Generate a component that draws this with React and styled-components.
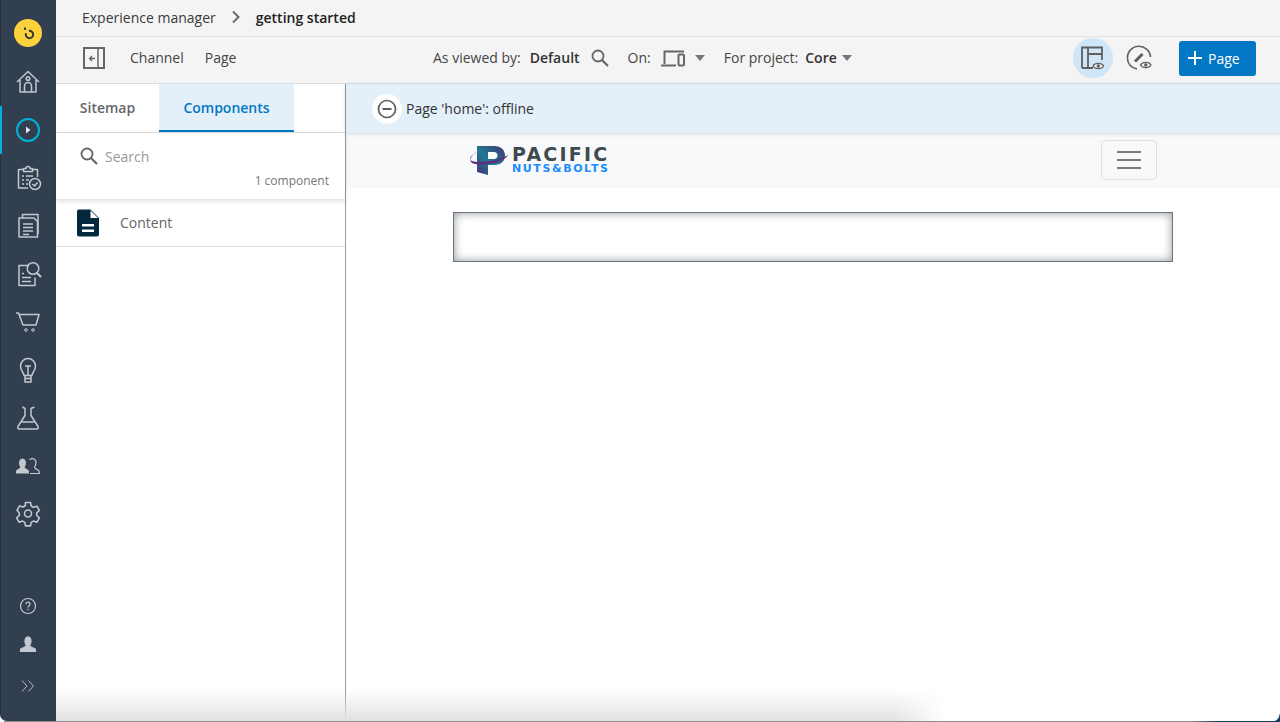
import React from 'react';
import styled, { createGlobalStyle } from 'styled-components';

const GlobalStyle = createGlobalStyle`
  html, body {
    margin: 0;
    padding: 0;
    background: #fff;
    font-family: "Open Sans", "Liberation Sans", sans-serif;
    font-size: 14px;
    color: #333;
  }
  * { box-sizing: border-box; }
`;

const Line = ({ children, size = 28, vb = 28, sw = 1.5, color = '#c3c8cf' }) => (
  <svg width={size} height={size} viewBox={`0 0 ${vb} ${vb}`} fill="none" stroke={color} strokeWidth={sw} strokeLinejoin="round">
    {children}
  </svg>
);

const Eye = ({ x, y }) => (
  <g transform={`translate(${x} ${y})`}>
    <path d="M0 4c2-3.400 8.600-3.400 10.600 0c-2 3.400-8.600 3.400-10.600 0z" fill="#f4f4f4" stroke="#5f5f5f" strokeWidth="1.200" />
    <circle cx="5.300" cy="4" r="1.700" fill="#5f5f5f" stroke="none" />
  </g>
);

const App = () => (
  <Page>
    <GlobalStyle />
    <Sidebar>
      <LogoSlot>
        <Badge>
          <svg width="16" height="16" viewBox="0 0 16 16" fill="none" stroke="#26343c" strokeWidth="1.900">
            <path d="M8.860 5.860A3.700 3.700 0 1 1 6 8.200" />
            <path d="M5 2.500V5" />
          </svg>
        </Badge>
      </LogoSlot>
      <NavItem>
        <Line>
          <path d="M3 14 14 3.500 25 14M6 12V24H22V12" />
          <path d="M10.500 24v-6a3.500 3.500 0 0 1 7 0v6" />
          <circle cx="14" cy="10.500" r="1.800" />
        </Line>
      </NavItem>
      <NavItem $active>
        <svg width="24" height="24" viewBox="0 0 24 24" fill="none">
          <circle cx="12" cy="12" r="11" stroke="#00b3dc" strokeWidth="2" />
          <path d="M10 8.500l4.500 3.500-4.500 3.500z" fill="#e6e8eb" />
        </svg>
      </NavItem>
      <NavItem>
        <Line>
          <path d="M14 24H4.500V5.500H9M19 5.500h4.500V13" />
          <path d="M9.500 7.500v-3H12a2 2 0 0 1 4 0h2.500v3z" />
          <path d="M8 12h2M12 12h7M8 16h2M12 16h3M8 20h2M12 20h2" />
          <circle cx="21" cy="20" r="5.500" />
          <path d="M18.500 20l2 2 3-3.500" />
        </Line>
      </NavItem>
      <NavItem>
        <Line>
          <path d="M5 6h15l3.500 3.500V25H5z" />
          <path d="M8.500 6V2.500H24v19h-.5" />
          <path d="M9 12h10M9 15.500h10M9 19h10M9 22.500h6" />
        </Line>
      </NavItem>
      <NavItem>
        <Line>
          <path d="M15 5.500H5v20h16v-8" />
          <path d="M8 13.500h2M8 17.500h9M8 21.500h9" />
          <circle cx="19" cy="8.500" r="5.800" />
          <path d="M23 13l4 4" strokeWidth="2" />
        </Line>
      </NavItem>
      <NavItem>
        <Line>
          <path d="M2 5h2.500l4.500 12h13l3-10.500H4.700" />
          <circle cx="12" cy="22" r="1.300" strokeWidth="1" />
          <circle cx="19" cy="22" r="1.300" strokeWidth="1" />
        </Line>
      </NavItem>
      <NavItem>
        <Line>
          <path d="M10 19.500c0-3-3.500-4.500-3.500-9.500a7.500 7.500 0 0 1 15 0c0 5-3.500 6.500-3.500 9.500z" />
          <path d="M11 10h6M14 10v9.500M10.500 22.500h7M11 19.500v6.500h6v-6.500" />
        </Line>
      </NavItem>
      <NavItem>
        <Line>
          <path d="M8.500 3l2.500 1.500v7L4 22.500c-.8 1.500 0 2.500 1.500 2.500h17c1.500 0 2.300-1 1.500-2.500l-7-11v-7L20.500 3" />
          <path d="M7.500 18h13" />
        </Line>
      </NavItem>
      <NavItem>
        <svg width="28" height="28" viewBox="0 0 28 28" fill="none">
          <path d="M2 21.500v-2c0-2 3.500-2.500 4.500-4.200-2-2-2.500-8.300 2-8.800 4.500.5 4 6.800 2 8.800 1 1.700 4.500 2.200 4.500 4.200v2z" fill="#c3c8cf" />
          <path d="M15.500 7.500c3.500-2 6.800-.5 6.500 3.500-.2 2-1 3.300-1.500 4.200.5 2 2 1.800 3.800 3 1.200.9 1 1.800 1 3.300H16" stroke="#c3c8cf" strokeWidth="1.200" />
        </svg>
      </NavItem>
      <NavItem>
        <Line sw={1.6}>
          <path d="M11.500 2.500h5l.7 3.500 2.300 1.300 3.400-1.100 2.500 4.300-2.700 2.400v2.600l2.700 2.400-2.500 4.300-3.400-1.100-2.300 1.300-.7 3.500h-5l-.7-3.500-2.300-1.300-3.400 1.100-2.500-4.300 2.700-2.400v-2.600L3.100 10.200l2.500-4.300 3.400 1.100 2.300-1.300z" />
          <circle cx="14" cy="13.500" r="3.500" />
        </Line>
      </NavItem>
      <SidebarFoot>
        <FootItem $h={38}>
          <svg width="18" height="18" viewBox="0 0 18 18" fill="none" stroke="#c3c8cf" strokeWidth="1.200">
            <circle cx="9" cy="9" r="7.500" />
            <path d="M7 7.200c0-2.700 4-2.700 4 0 0 1.600-2 1.500-2 3.200M9 11.800v1.400" />
          </svg>
        </FootItem>
        <FootItem $h={38}>
          <svg width="18" height="18" viewBox="0 0 18 18" fill="#c3c8cf">
            <path d="M1 17v-2.500c0-1.800 4.800-2.500 5.800-4C4.800 8.500 4.500 1.500 9 1.200c4.500.3 4.200 7.300 2.200 9.300 1 1.500 5.800 2.200 5.800 4V17z" />
          </svg>
        </FootItem>
        <FootItem $h={46}>
          <svg width="14" height="12" viewBox="0 0 14 12" fill="none" stroke="#c3c8cf" strokeWidth="0.900">
            <path d="M1 .5 6 6l-5 5.500M7.500.5 12.500 6l-5 5.500" />
          </svg>
        </FootItem>
      </SidebarFoot>
    </Sidebar>

    <Main>
      <Breadcrumb>
        <span>Experience manager</span>
        <Chevron width="10" height="14" viewBox="0 0 10 14" fill="none" stroke="#6b6b6b" strokeWidth="2">
          <path d="M2 1.500 7.500 7 2 12.500" />
        </Chevron>
        <strong>getting started</strong>
      </Breadcrumb>

      <Toolbar>
        <LeftTools>
          <svg width="23" height="23" viewBox="0 0 23 23" fill="none" stroke="#666" strokeWidth="2">
            <rect x="1" y="1" width="20" height="20" />
            <path d="M15 1v20" strokeWidth="1.500" />
            <path d="M12 11.500H6.500M9 9l-2.500 2.500L9 14" strokeWidth="1.300" />
          </svg>
          <ToolLink>Channel</ToolLink>
          <ToolLink>Page</ToolLink>
        </LeftTools>
        <CenterTools>
          <Label>As viewed by:</Label>
          <Value $left={9}>Default</Value>
          <SearchIcon />
          <Label $left={19}>On:</Label>
          <DeviceIcon width="24" height="17" viewBox="0 0 24 17" fill="none" stroke="#666" strokeWidth="2">
            <path d="M3.500 14V1.500H23" />
            <path d="M0 15.500h15" />
            <rect x="17.500" y="4.500" width="5.500" height="11" rx="1" />
          </DeviceIcon>
          <Caret $left={10} />
          <Label $left={19}>For project:</Label>
          <Value $left={7}>Core</Value>
          <Caret $left={5} />
        </CenterTools>
        <RightTools>
          <RoundTool $on>
            <svg width="26" height="26" viewBox="0 0 26 26" fill="none" stroke="#5f5f5f" strokeWidth="1.800">
              <path d="M2 23V2.500h20V15M2 23h11" />
              <path d="M8 2.500V23M8 9h14" />
              <Eye x={13} y={17} />
            </svg>
          </RoundTool>
          <RoundTool>
            <svg width="26" height="26" viewBox="0 0 26 26" fill="none" stroke="#5f5f5f" strokeWidth="1.600">
              <path d="M11 24C5 23 1.500 18.500 1.500 13.500A11.500 11.500 0 0 1 24.500 12" />
              <path d="M9 16.500l7.500-7.500" strokeWidth="3" />
              <Eye x={14.500} y={16} />
            </svg>
          </RoundTool>
          <AddButton>
            <svg width="14" height="14" viewBox="0 0 14 14" stroke="#fff" strokeWidth="2">
              <path d="M7 0v14M0 7h14" />
            </svg>
            Page
          </AddButton>
        </RightTools>
      </Toolbar>

      <Body>
        <Panel>
          <Tabs>
            <Tab $w={103}>Sitemap</Tab>
            <Tab $w={135} $active>Components</Tab>
          </Tabs>
          <SearchBlock>
            <SearchRow>
              <SearchIcon />
              <Placeholder>Search</Placeholder>
            </SearchRow>
            <Count>1 component</Count>
          </SearchBlock>
          <ComponentRow>
            <svg width="24" height="28" viewBox="0 0 24 28">
              <path d="M3 .5h11.500L23 9v16.500a2 2 0 0 1-2 2H3a2 2 0 0 1-2-2v-23a2 2 0 0 1 2-2z" fill="#04293f" />
              <path d="M14.500 1.500 22 9h-7.500z" fill="#fff" />
              <path d="M6 15h12v2.500H6zM6 20.500h12V23H6z" fill="#fff" />
            </svg>
            <span>Content</span>
          </ComponentRow>
        </Panel>

        <Preview>
          <Banner>
            <StatusDot>
              <svg width="20" height="20" viewBox="0 0 20 20" fill="none" stroke="#5c5c5c" strokeWidth="1.700">
                <circle cx="10" cy="10" r="8.500" />
                <path d="M5.500 10h9" strokeWidth="2" />
              </svg>
            </StatusDot>
            <span>Page 'home': offline</span>
          </Banner>
          <SiteNav>
            <Container $nav>
              <Brand>
                <svg width="40" height="32" viewBox="0 0 40 32" fill="none">
                  <defs>
                    <linearGradient id="brandFill" x1="0" y1="1" x2="1" y2="0">
                      <stop offset="0" stopColor="#4b2c77" />
                      <stop offset="0.450" stopColor="#1f7a93" />
                      <stop offset="0.800" stopColor="#34507f" />
                      <stop offset="1" stopColor="#5a2f80" />
                    </linearGradient>
                  </defs>
                  <path d="M8 2h17c7 0 11 4 11 9.500S32 21 25 21h-6v10l-11-3z" fill="url(#brandFill)" />
                  <path d="M19 8h6c2 0 3.500 1.400 3.500 3.500S27 15 25 15h-6z" fill="#fff" />
                  <path d="M7 9C2 11.500.3 14 1.500 16c3 3 17 2.500 27-.5 6-2 10-3.500 11-5.500-1 3.500-6 6.500-13 8.500-9 2.500-20 3-24 0-3-2.500 0-7 4.500-10z" fill="#5a2f80" />
                </svg>
                <BrandText>
                  <BrandName>PACIFIC</BrandName>
                  <BrandSub>NUTS&amp;BOLTS</BrandSub>
                </BrandText>
              </Brand>
              <Burger>
                <span />
                <span />
                <span />
              </Burger>
            </Container>
          </SiteNav>
          <Container>
            <DropZone />
          </Container>
        </Preview>
      </Body>
    </Main>
    <BottomShade />
    <BottomEdge />
    <WindowCorner />
  </Page>
);

const SearchIcon = () => (
  <IconBox>
    <svg width="18" height="18" viewBox="0 0 18 18" fill="none" stroke="#666" strokeWidth="1.800">
      <circle cx="7" cy="7" r="5.500" />
      <path d="M11 11l6 6" strokeWidth="2.200" />
    </svg>
  </IconBox>
);

export default App;

const Page = styled.div`
  position: relative;
  display: flex;
  width: 1280px;
  height: 722px;
  overflow: hidden;
  background: #fff;
`;

const Sidebar = styled.nav`
  display: flex;
  flex-direction: column;
  flex: 0 0 56px;
  height: 721px;
  padding-top: 9px;
  background: #323f50;
  border-left: 1px solid #27313e;
  border-bottom-left-radius: 7px;
`;

const LogoSlot = styled.div`
  display: flex;
  justify-content: center;
  height: 49px;
  margin-left: -1px;
`;

const Badge = styled.div`
  display: flex;
  align-items: center;
  justify-content: center;
  width: 28px;
  height: 28px;
  margin-top: 10px;
  border-radius: 50%;
  background: #fdd13c;
`;

const NavItem = styled.div`
  display: flex;
  align-items: center;
  justify-content: center;
  height: 48px;
  margin-left: -1px;
  border-left: 2px solid ${({ $active }) => ($active ? '#00b3dc' : 'transparent')};
  padding-right: 2px;
`;

const SidebarFoot = styled.div`
  display: flex;
  flex-direction: column;
  margin-top: auto;
  margin-left: -1px;
  padding-bottom: 12px;
`;

const FootItem = styled.div`
  display: flex;
  align-items: center;
  justify-content: center;
  height: ${({ $h }) => $h}px;
`;

const Main = styled.div`
  display: flex;
  flex-direction: column;
  flex: 1;
  min-width: 0;
`;

const Breadcrumb = styled.div`
  display: flex;
  align-items: center;
  height: 37px;
  padding: 0 0 2px 26px;
  background: #f4f4f4;
  border-bottom: 1px solid #e2e2e2;
  color: #3a3a3a;

  strong {
    font-weight: 600;
    color: #222;
  }
`;

const Chevron = styled.svg`
  margin: 0 15px 0 15px;
`;

const Toolbar = styled.div`
  display: flex;
  align-items: center;
  height: 47px;
  padding-bottom: 4px;
  background: #f4f4f4;
  border-bottom: 1px solid #dcdcdc;
`;

const LeftTools = styled.div`
  display: flex;
  align-items: center;
  flex: 0 0 377px;
  padding-left: 27px;
`;

const ToolLink = styled.span`
  margin: 0 0 2px 21px;
  color: #444;

  svg + & {
    margin-left: 24px;
  }
`;

const CenterTools = styled.div`
  display: flex;
  align-items: center;
  flex: 1;
`;

const Label = styled.span`
  margin: 0 0 2px ${({ $left }) => $left || 0}px;
  color: #444;
`;

const Value = styled.span`
  margin: 0 0 2px ${({ $left }) => $left}px;
  font-weight: 600;
  color: #333;
`;

const IconBox = styled.span`
  display: inline-flex;
  margin-left: 11px;
`;

const DeviceIcon = styled.svg`
  margin-left: 10px;
`;

const Caret = styled.span`
  width: 0;
  height: 0;
  margin-left: ${({ $left }) => $left}px;
  border-left: 5.500px solid transparent;
  border-right: 5.500px solid transparent;
  border-top: 6px solid #777;
`;

const RightTools = styled.div`
  display: flex;
  align-items: center;
  padding-right: 24px;
`;

const RoundTool = styled.div`
  display: flex;
  align-items: center;
  justify-content: center;
  width: 40px;
  height: 40px;
  margin-left: 6px;
  border-radius: 50%;
  background: ${({ $on }) => ($on ? '#cfe6f9' : 'transparent')};
`;

const AddButton = styled.button`
  display: flex;
  align-items: center;
  gap: 6px;
  width: 77px;
  height: 35px;
  margin-left: 20px;
  padding: 0 0 0 9px;
  border: 0;
  border-radius: 3px;
  background: #0277c3;
  color: #fff;
  font: 400 14px "Open Sans", sans-serif;
`;

const Body = styled.div`
  display: flex;
  flex: 1;
  min-height: 0;
`;

const Panel = styled.aside`
  flex: 0 0 290px;
  height: 633px;
  border-right: 1px solid #9a9a9a;
`;

const Tabs = styled.div`
  display: flex;
  height: 49px;
  border-bottom: 1px solid #e0e0e0;
`;

const Tab = styled.div`
  display: flex;
  align-items: center;
  justify-content: center;
  width: ${({ $w }) => $w}px;
  height: 48px;
  font-weight: 600;
  color: ${({ $active }) => ($active ? '#0277c3' : '#666')};
  background: ${({ $active }) => ($active ? '#e3f0f9' : 'transparent')};
  border-bottom: 2px solid ${({ $active }) => ($active ? '#0277c3' : 'transparent')};
`;

const SearchBlock = styled.div`
  position: relative;
  height: 66px;
  padding: 13px 16px 0 24px;
  box-shadow: 0 2px 5px rgba(0, 0, 0, 0.14);
`;

const SearchRow = styled.div`
  display: flex;
  align-items: center;
  height: 20px;

  ${IconBox} {
    margin-left: 0;
  }
`;

const Placeholder = styled.span`
  margin-left: 7px;
  color: #999;
`;

const Count = styled.div`
  margin-top: 7px;
  text-align: right;
  font-size: 12px;
  line-height: 16px;
  color: #777;
`;

const ComponentRow = styled.div`
  display: flex;
  align-items: center;
  height: 48px;
  padding-left: 20px;
  border-bottom: 1px solid #dcdcdc;
  color: #666;

  span {
    margin-left: 20px;
  }
`;

const Preview = styled.section`
  flex: 1;
  min-width: 0;
`;

const Banner = styled.div`
  position: relative;
  display: flex;
  align-items: center;
  height: 49px;
  padding-left: 26px;
  background: #e3f0f9;
  box-shadow: 0 1px 4px rgba(0, 0, 0, 0.14);
  color: #333;
`;

const StatusDot = styled.div`
  display: flex;
  align-items: center;
  justify-content: center;
  width: 30px;
  height: 30px;
  margin-right: 4px;
  border-radius: 50%;
  background: #fff;
`;

const SiteNav = styled.div`
  height: 55px;
  background: #f8f9fa;
`;

const Container = styled.div`
  display: ${({ $nav }) => ($nav ? 'flex' : 'block')};
  align-items: center;
  justify-content: space-between;
  width: 720px;
  height: ${({ $nav }) => ($nav ? '55px' : 'auto')};
  margin: 0 auto;
  padding: ${({ $nav }) => ($nav ? '0 16px 2px' : '0')};
`;

const Brand = styled.div`
  display: flex;
  align-items: center;
  gap: 3px;
`;

const BrandText = styled.div`
  display: flex;
  flex-direction: column;
  margin-top: -1px;
`;

const BrandName = styled.span`
  font-family: "DejaVu Sans", sans-serif;
  font-size: 19px;
  line-height: 18px;
  font-weight: 700;
  letter-spacing: 2.200px;
  color: #3d4b4f;
`;

const BrandSub = styled.span`
  margin-top: 1px;
  font-family: "DejaVu Sans", sans-serif;
  font-size: 11px;
  line-height: 10px;
  font-weight: 700;
  letter-spacing: 1.600px;
  color: #1a8cff;
`;

const Burger = styled.div`
  display: flex;
  flex-direction: column;
  align-items: center;
  justify-content: center;
  gap: 6px;
  width: 56px;
  height: 40px;
  border: 1px solid #dedfe1;
  border-radius: 4px;

  span {
    width: 24px;
    height: 2px;
    background: #7c7c7c;
  }
`;

const DropZone = styled.div`
  height: 50px;
  margin-top: 24px;
  border: 1px solid #6c757d;
  box-shadow: inset 0 0 10px rgba(108, 117, 125, 0.75);
`;

const BottomShade = styled.div`
  position: absolute;
  left: 56px;
  bottom: 1px;
  width: 890px;
  height: 32px;
  background: linear-gradient(to bottom, rgba(225, 225, 225, 0), rgba(225, 225, 225, 1));
  -webkit-mask-image: linear-gradient(to right, #000 94%, transparent);
  mask-image: linear-gradient(to right, #000 94%, transparent);
  pointer-events: none;
`;

const BottomEdge = styled.div`
  position: absolute;
  left: 4px;
  right: 0;
  bottom: 0;
  height: 1px;
  background: linear-gradient(to right, #8d8d8d 93%, #123f63 95%);
`;

const WindowCorner = styled.div`
  position: absolute;
  right: 0;
  bottom: 0;
  width: 8px;
  height: 8px;
  background: radial-gradient(circle at 0 0, transparent 7px, #123f63 8px);
`;
